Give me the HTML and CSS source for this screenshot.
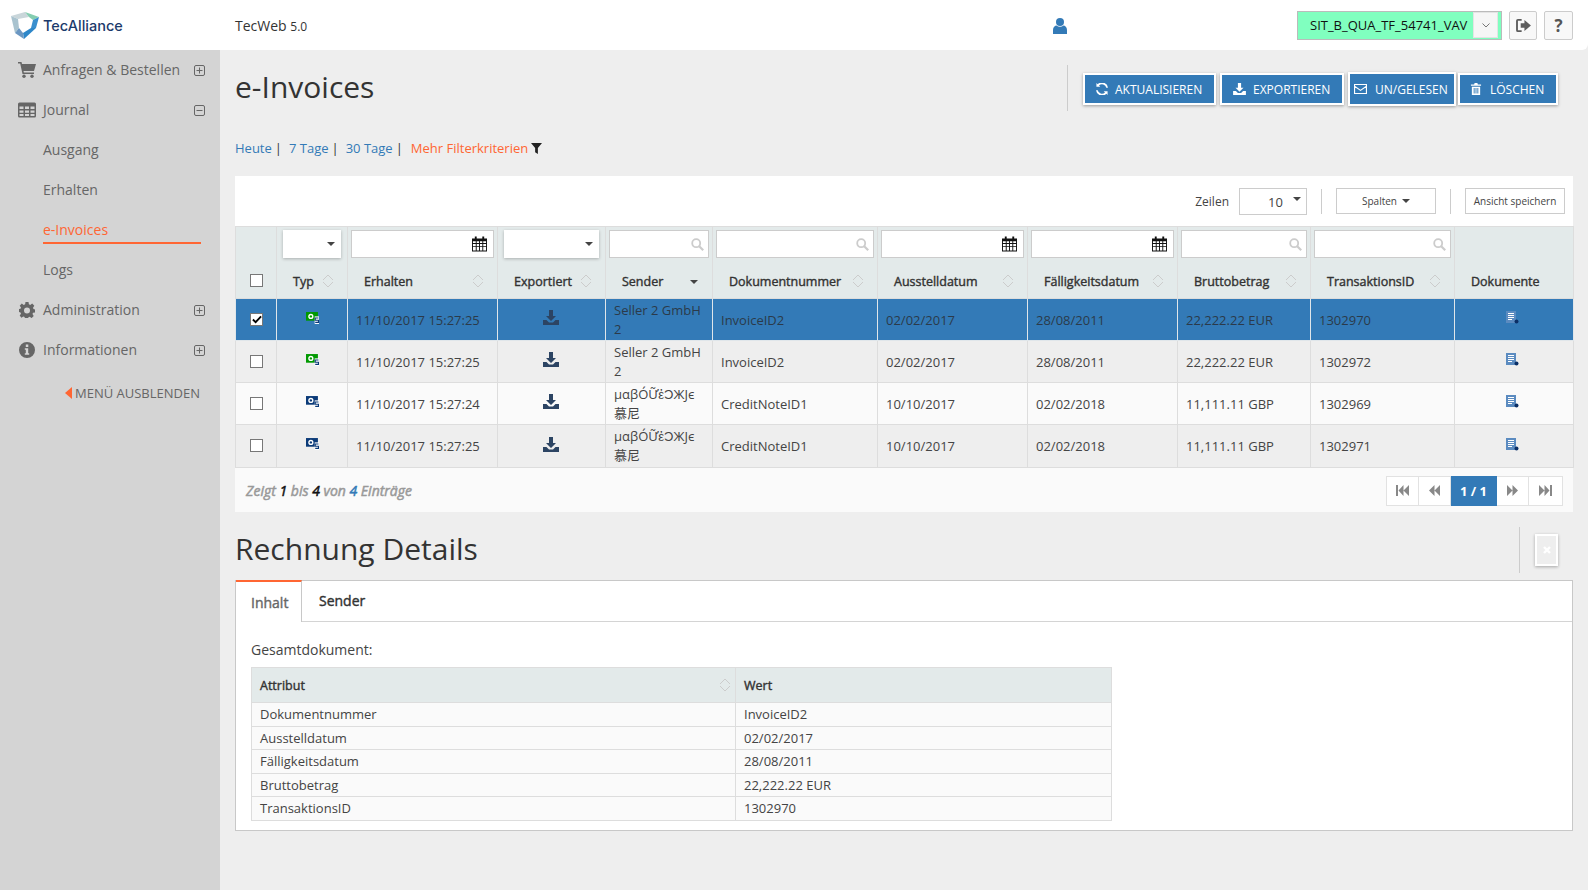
FILE: index.html
```html
<!DOCTYPE html>
<html lang="de">
<head>
    <meta charset="UTF-8">
    <title>e-Invoices - TecWeb</title>
    <link rel="stylesheet" href="styles.css">
</head>
<body>
    <svg class="icon-defs">
        <symbol id="i-download" viewBox="0 0 16 15"><path d="M6 0h4v6h3l-5 5-5-5h3z"/><path d="M0 10h3.500l2.500 2.500h4L12.500 10H16v5H0z"/></symbol>
        <symbol id="i-note-green" viewBox="0 0 12 11"><path fill="#090" d="M0 0h11v8H0z"/><circle cx="4.500" cy="4" r="2.400" fill="#fff"/><circle cx="4.500" cy="4" r="1.100" fill="#090"/><path fill="#fff" d="M8 4h4v7H8z"/><path fill="none" stroke="#0b3a78" d="M11.500 5.500h-3v2h3v2h-3"/></symbol>
        <symbol id="i-note-blue" viewBox="0 0 12 11"><path fill="#0b3a78" d="M0 0h11v8H0z"/><circle cx="4.500" cy="4" r="2.400" fill="#fff"/><circle cx="4.500" cy="4" r="1.100" fill="#0b3a78"/><path fill="#fff" d="M8 4h4v7H8z"/><path fill="none" stroke="#0b3a78" d="M11.500 5.500h-3v2h3v2h-3"/></symbol>
        <symbol id="i-doc" viewBox="0 0 13 13"><path fill="#5b8bc0" d="M0 0h10v12H0z"/><path stroke="#fff" d="M2 2.500h6M2 4.500h6M2 6.500h6M2 8.500h4"/><circle cx="10.500" cy="10.500" r="2" fill="#0b2f66"/></symbol>
        <symbol id="i-calendar" viewBox="0 0 16 16"><path d="M0 2h3V0h2v2h6V0h2v2h3v14H0z"/><path fill="#fff" d="M1 5h3v2H1zM5 5h2.500v2H5zM8.500 5H11v2H8.500zM12 5h3v2h-3zM1 8h3v2H1zM5 8h2.500v2H5zM8.500 8H11v2H8.500zM12 8h3v2h-3zM1 11h3v4H1zM5 11h2.500v4H5zM8.500 11H11v4H8.500zM12 11h3v4h-3z"/></symbol>
        <symbol id="i-search" viewBox="0 0 13 13"><circle cx="5.200" cy="5.200" r="4" fill="none" stroke="currentColor" stroke-width="1.800"/><path stroke="currentColor" stroke-width="2.200" d="M8.200 8.200l4 4"/></symbol>
        <symbol id="i-sort" viewBox="0 0 12 14"><path fill="none" stroke="currentColor" d="M1 6l5-5 5 5M1 8l5 5 5-5"/></symbol>
        <symbol id="i-plus" viewBox="0 0 11 11"><rect x=".5" y=".5" width="10" height="10" rx="1.500" fill="none" stroke="currentColor"/><path stroke="currentColor" d="M2.500 5.500h6M5.500 2.500v6"/></symbol>
        <symbol id="i-minus" viewBox="0 0 11 11"><rect x=".5" y=".5" width="10" height="10" rx="1.500" fill="none" stroke="currentColor"/><path stroke="currentColor" d="M2.500 5.500h6"/></symbol>
        <symbol id="i-nav-first" viewBox="0 0 13 11"><path d="M0 0h2v11H0zM2.500 5.500L7.500 0v11zM7.500 5.500L13 0v11z"/></symbol>
        <symbol id="i-nav-prev" viewBox="0 0 11 11"><path d="M0 5.500L5.500 0v11zM5.500 5.500L11 0v11z"/></symbol>
        <symbol id="i-nav-next" viewBox="0 0 11 11"><path d="M0 0l5.500 5.500L0 11zM5.500 0L11 5.500 5.500 11z"/></symbol>
        <symbol id="i-nav-last" viewBox="0 0 13 11"><path d="M0 0l5.500 5.500L0 11zM5.500 0l5 5.500-5 5.500zM11 0h2v11h-2z"/></symbol>
    </svg>

    <header class="topbar">
        <div class="brand">
            <svg class="brand-mark" viewBox="11 11 28 27">
                <path fill="#c9d6da" d="M11 15l14-4 4 5-11 2z"/>
                <path fill="#a9c3cf" d="M11 15l7 3 1 9-4 5z"/>
                <path fill="#84cdb0" d="M25 11l14 5-6 3-4-3z"/>
                <path fill="#3a8fce" d="M39 16l-3 11-5 0 2-8z"/>
                <path fill="#2e87c9" d="M36 27L24 38l-1-6 8-5z"/>
                <path fill="#6b97c2" d="M15 32l4-5 4 5 1 6z"/>
            </svg>
            <span class="brand-name">TecAlliance</span>
        </div>
        <span class="app-name">TecWeb <small>5.0</small></span>
        <svg class="user-icon" viewBox="0 0 14 16"><circle cx="7" cy="4" r="4"/><path d="M0 16v-4c0-3 2-4.500 3.500-4.500 1 .8 2.200 1.200 3.500 1.200s2.500-.4 3.500-1.200C12 7.500 14 9 14 12v4z"/></svg>
        <div class="topbar-right">
            <div class="env-select">
                <span class="env-name">SIT_B_QUA_TF_54741_VAV</span>
                <span class="env-caret"><svg viewBox="0 0 8 5"><path fill="none" stroke="currentColor" d="M.5.5L4 4 7.500.5"/></svg></span>
            </div>
            <a class="icon-btn logout-btn"><svg viewBox="0 0 16 14"><path d="M0 2a2 2 0 012-2h4v2H2v10h4v2H2a2 2 0 01-2-2z"/><path d="M5 4.500h4V1l7 6-7 6V9.500H5z"/></svg></a>
            <a class="icon-btn help-btn">?</a>
        </div>
    </header>

    <div class="layout">
        <nav class="sidebar">
            <a class="nav-item">
                <svg class="nav-icon" viewBox="0 0 18 16"><path d="M0 0h3.500l.5 2h14l-2 7H5.500l.4 1.500H16V12H4.500L2.200 1.500H0z"/><circle cx="6" cy="14.300" r="1.700"/><circle cx="14" cy="14.300" r="1.700"/></svg>
                <span class="nav-label">Anfragen &amp; Bestellen</span>
                <svg class="nav-toggle"><use href="#i-plus"/></svg>
            </a>
            <a class="nav-item">
                <svg class="nav-icon" viewBox="0 0 18 15"><path fill-rule="evenodd" d="M1.500 0h15A1.500 1.500 0 0118 1.500v12a1.500 1.500 0 01-1.500 1.500h-15A1.500 1.500 0 010 13.500v-12A1.500 1.500 0 011.500 0zM1.500 4v2.500h4V4zM7 4v2.500h4V4zM12.500 4v2.500h4V4zM1.500 8v2.200h4V8zM7 8v2.200h4V8zM12.500 8v2.200h4V8zM1.500 11.500v2h4v-2zM7 11.500v2h4v-2zM12.500 11.500v2h4v-2z"/></svg>
                <span class="nav-label">Journal</span>
                <svg class="nav-toggle"><use href="#i-minus"/></svg>
            </a>
            <a class="nav-sub"><span>Ausgang</span></a>
            <a class="nav-sub"><span>Erhalten</span></a>
            <a class="nav-sub active"><span>e-Invoices</span></a>
            <a class="nav-sub"><span>Logs</span></a>
            <a class="nav-item">
                <svg class="nav-icon" viewBox="0 0 16 16"><path fill-rule="evenodd" d="M6.500 0h3l.4 2.300 1.300.6L13.200 1.600l2.100 2.100L14 5.700l.5 1.300 1.500.4v3l-2 .4-.5 1.300 1.200 1.900-2.100 2.100-1.900-1.300-1.300.5-.4 1.600h-3l-.4-2-1.300-.5-1.900 1.300L.7 13.600l1.300-1.900-.5-1.300L0 10V7l1.500-.3.500-1.300L.7 3.700l2.100-2.100 1.900 1.300 1.400-.6zM8 5.500a3 3 0 100 6 3 3 0 000-6z"/></svg>
                <span class="nav-label">Administration</span>
                <svg class="nav-toggle"><use href="#i-plus"/></svg>
            </a>
            <a class="nav-item">
                <svg class="nav-icon" viewBox="0 0 16 16"><path fill-rule="evenodd" d="M8 0a8 8 0 110 16A8 8 0 018 0zM6.800 2.500v2.400h2.500V2.500zM5.800 6.300v1.500h1v3.500h-1v1.500h4.400v-1.500h-1V6.300z"/></svg>
                <span class="nav-label">Informationen</span>
                <svg class="nav-toggle"><use href="#i-plus"/></svg>
            </a>
            <a class="nav-hide"><span class="hide-arrow"></span>MENÜ AUSBLENDEN</a>
        </nav>

        <main class="content">
            <div class="page-head">
                <h1 class="page-title">e-Invoices</h1>
                <div class="action-bar">
                    <a class="action-btn btn-refresh">
                        <svg viewBox="0 0 14 14"><path d="M12 5.500A5 5 0 003.500 3L5 4.500H.5V0L2 1.500A7 7 0 0114 5.500zM2 8.500A5 5 0 0010.500 11L9 9.500h4.500V14L12 12.500A7 7 0 010 8.500z"/></svg>
                        AKTUALISIEREN
                    </a>
                    <a class="action-btn btn-export">
                        <svg viewBox="0 0 16 15"><use href="#i-download"/></svg>
                        EXPORTIEREN
                    </a>
                    <a class="action-btn btn-read">
                        <svg viewBox="0 0 14 11"><path fill="none" stroke="currentColor" stroke-width="1.200" d="M.6.6h12.800v9.800H.6zM.6 2.500L7 7l6.400-4.500"/></svg>
                        UN/GELESEN
                    </a>
                    <a class="action-btn btn-delete">
                        <svg viewBox="0 0 11 13"><path fill-rule="evenodd" d="M4 0h3l.5 1.500H11V3H0V1.500h3.500zM1 4h9v9H1zM3 5.500v6h1v-6zM5 5.500v6h1v-6zM7 5.500v6h1v-6z"/></svg>
                        LÖSCHEN
                    </a>
                </div>
            </div>

            <div class="quick-filter">
                <a>Heute</a><span class="sep">|</span>
                <a>7 Tage</a><span class="sep">|</span>
                <a>30 Tage</a><span class="sep">|</span>
                <a class="more-filter">Mehr Filterkriterien</a>
                <svg class="funnel" viewBox="0 0 12 12"><path d="M0 0h12L7.500 5.500V12l-3-2V5.500z"/></svg>
            </div>

            <section class="grid-panel">
                <div class="grid-toolbar">
                    <span class="rows-label">Zeilen</span>
                    <div class="rows-select"><span>10</span><i class="caret"></i></div>
                    <span class="tool-sep"></span>
                    <a class="tool-btn btn-columns">Spalten <i class="caret"></i></a>
                    <span class="tool-sep"></span>
                    <a class="tool-btn btn-save">Ansicht speichern</a>
                </div>

                <table class="grid">
                    <colgroup>
                        <col class="c-check"><col class="c-type"><col class="c-received"><col class="c-exported">
                        <col class="c-sender"><col class="c-number"><col class="c-date"><col class="c-date">
                        <col class="c-amount"><col class="c-trans"><col class="c-docs">
                    </colgroup>
                    <thead>
                        <tr class="filter-row">
                            <th></th>
                            <th class="pick-cell"><div class="pick"><i class="caret"></i></div></th>
                            <th><div class="field"><svg class="cal"><use href="#i-calendar"/></svg></div></th>
                            <th class="pick-cell"><div class="pick"><i class="caret"></i></div></th>
                            <th><div class="field"><svg class="lens"><use href="#i-search"/></svg></div></th>
                            <th><div class="field"><svg class="lens"><use href="#i-search"/></svg></div></th>
                            <th><div class="field"><svg class="cal"><use href="#i-calendar"/></svg></div></th>
                            <th><div class="field"><svg class="cal"><use href="#i-calendar"/></svg></div></th>
                            <th><div class="field"><svg class="lens"><use href="#i-search"/></svg></div></th>
                            <th><div class="field"><svg class="lens"><use href="#i-search"/></svg></div></th>
                            <th></th>
                        </tr>
                        <tr class="label-row">
                            <th class="check-cell"><span class="check"></span></th>
                            <th>Typ<svg class="sort"><use href="#i-sort"/></svg></th>
                            <th>Erhalten<svg class="sort"><use href="#i-sort"/></svg></th>
                            <th>Exportiert<svg class="sort"><use href="#i-sort"/></svg></th>
                            <th>Sender<i class="caret sort-active"></i></th>
                            <th>Dokumentnummer<svg class="sort"><use href="#i-sort"/></svg></th>
                            <th>Ausstelldatum<svg class="sort"><use href="#i-sort"/></svg></th>
                            <th>Fälligkeitsdatum<svg class="sort"><use href="#i-sort"/></svg></th>
                            <th>Bruttobetrag<svg class="sort"><use href="#i-sort"/></svg></th>
                            <th>TransaktionsID<svg class="sort"><use href="#i-sort"/></svg></th>
                            <th>Dokumente</th>
                        </tr>
                    </thead>
                    <tbody>
                        <tr class="selected">
                            <td class="check-cell"><span class="check checked"><svg viewBox="0 0 11 9"><path fill="none" stroke="#000" stroke-width="2" d="M1 4.500L4 7.500 10 1"/></svg></span></td>
                            <td class="icon-cell"><svg class="type-icon"><use href="#i-note-green"/></svg></td>
                            <td>11/10/2017 15:27:25</td>
                            <td class="icon-cell"><svg class="dl-icon"><use href="#i-download"/></svg></td>
                            <td class="sender">Seller 2 GmbH 2</td>
                            <td>InvoiceID2</td>
                            <td>02/02/2017</td>
                            <td>28/08/2011</td>
                            <td>22,222.22 EUR</td>
                            <td>1302970</td>
                            <td class="icon-cell"><svg class="doc-icon"><use href="#i-doc"/></svg></td>
                        </tr>
                        <tr class="even">
                            <td class="check-cell"><span class="check"></span></td>
                            <td class="icon-cell"><svg class="type-icon"><use href="#i-note-green"/></svg></td>
                            <td>11/10/2017 15:27:25</td>
                            <td class="icon-cell"><svg class="dl-icon"><use href="#i-download"/></svg></td>
                            <td class="sender">Seller 2 GmbH 2</td>
                            <td>InvoiceID2</td>
                            <td>02/02/2017</td>
                            <td>28/08/2011</td>
                            <td>22,222.22 EUR</td>
                            <td>1302972</td>
                            <td class="icon-cell"><svg class="doc-icon"><use href="#i-doc"/></svg></td>
                        </tr>
                        <tr>
                            <td class="check-cell"><span class="check"></span></td>
                            <td class="icon-cell"><svg class="type-icon"><use href="#i-note-blue"/></svg></td>
                            <td>11/10/2017 15:27:24</td>
                            <td class="icon-cell"><svg class="dl-icon"><use href="#i-download"/></svg></td>
                            <td class="sender">μαβÓỮἐϽЖJє 慕尼</td>
                            <td>CreditNoteID1</td>
                            <td>10/10/2017</td>
                            <td>02/02/2018</td>
                            <td>11,111.11 GBP</td>
                            <td>1302969</td>
                            <td class="icon-cell"><svg class="doc-icon"><use href="#i-doc"/></svg></td>
                        </tr>
                        <tr class="even last">
                            <td class="check-cell"><span class="check"></span></td>
                            <td class="icon-cell"><svg class="type-icon"><use href="#i-note-blue"/></svg></td>
                            <td>11/10/2017 15:27:25</td>
                            <td class="icon-cell"><svg class="dl-icon"><use href="#i-download"/></svg></td>
                            <td class="sender">μαβÓỮἐϽЖJє 慕尼</td>
                            <td>CreditNoteID1</td>
                            <td>10/10/2017</td>
                            <td>02/02/2018</td>
                            <td>11,111.11 GBP</td>
                            <td>1302971</td>
                            <td class="icon-cell"><svg class="doc-icon"><use href="#i-doc"/></svg></td>
                        </tr>
                    </tbody>
                </table>

                <div class="grid-footer">
                    <span class="entries">Zeigt <b>1</b> bis <b>4</b> von <b class="total">4</b> Einträge</span>
                    <div class="pager">
                        <a class="page-btn first"><svg><use href="#i-nav-first"/></svg></a>
                        <a class="page-btn"><svg><use href="#i-nav-prev"/></svg></a>
                        <a class="page-btn current">1 / 1</a>
                        <a class="page-btn"><svg><use href="#i-nav-next"/></svg></a>
                        <a class="page-btn last"><svg><use href="#i-nav-last"/></svg></a>
                    </div>
                </div>
            </section>

            <div class="details-head">
                <h2 class="details-title">Rechnung Details</h2>
                <div class="details-close">
                    <a class="close-btn"><svg viewBox="0 0 8 8"><path stroke="#fff" stroke-width="2.400" d="M1 1l6 6M7 1L1 7"/></svg></a>
                </div>
            </div>

            <section class="tab-panel">
                <div class="tabs">
                    <a class="tab active">Inhalt</a>
                    <a class="tab">Sender</a>
                </div>
                <div class="tab-body">
                    <p class="doc-label">Gesamtdokument:</p>
                    <table class="attr-table">
                        <thead>
                            <tr><th class="attr-name">Attribut<svg class="sort"><use href="#i-sort"/></svg></th><th>Wert</th></tr>
                        </thead>
                        <tbody>
                            <tr><td>Dokumentnummer</td><td>InvoiceID2</td></tr>
                            <tr><td>Ausstelldatum</td><td>02/02/2017</td></tr>
                            <tr><td>Fälligkeitsdatum</td><td>28/08/2011</td></tr>
                            <tr><td>Bruttobetrag</td><td>22,222.22 EUR</td></tr>
                            <tr><td>TransaktionsID</td><td>1302970</td></tr>
                        </tbody>
                    </table>
                </div>
            </section>
        </main>
    </div>
</body>
</html>
```
FILE: styles.css
```css
* {
    box-sizing: border-box;
}
body {
    margin: 0;
    height: 100vh;
    overflow: hidden;
    background-color: #eeeeee;
    color: #444;
    font-family: "Open Sans", "Noto Sans CJK SC", sans-serif;
    font-size: 13px;
}
.icon-defs {
    display: block;
    width: 0;
    height: 0;
}
h1, h2, p {
    margin: 0;
    font-weight: 400;
}

/* top bar */
.topbar {
    height: 50px;
    display: flex;
    align-items: center;
    background-color: white;
    border-bottom-right-radius: 6px;
}
.brand {
    width: 235px;
    padding-left: 11px;
    display: flex;
    align-items: center;
    gap: 4px;
}
.brand-mark {
    width: 28px;
    height: 27px;
}
.brand-name {
    font-family: Inter, sans-serif;
    font-size: 14.500px;
    font-weight: 500;
    color: #1b3a6b;
}
.app-name {
    width: 818px;
    font-size: 14px;
    color: #333;
}
.app-name small {
    font-size: 12px;
}
.user-icon {
    width: 14px;
    height: 16px;
    margin-top: 1px;
    fill: #337ab7;
}
.topbar-right {
    margin-left: auto;
    padding-right: 15px;
    display: flex;
    align-items: center;
}
.env-select {
    width: 205px;
    height: 29px;
    display: flex;
    align-items: center;
    background-color: #80ffbf;
    border: 1px solid #bbb;
    padding-left: 12px;
    color: #111;
    font-size: 13px;
}
.env-name {
    flex: 1;
    white-space: nowrap;
}
.env-caret {
    width: 25px;
    height: 26px;
    flex-shrink: 0;
    margin-right: 3px;
    display: flex;
    align-items: center;
    justify-content: center;
    background-color: #f6f6f6;
    border: 1px solid #e4e4e4;
    color: #777;
}
.env-caret svg {
    width: 8px;
    height: 5px;
}
.icon-btn {
    width: 29px;
    height: 29px;
    margin-left: 7px;
    display: flex;
    align-items: center;
    justify-content: center;
    background-color: #f8f8f8;
    border: 1px solid #ccc;
    border-radius: 2px;
    color: #555;
}
.icon-btn svg {
    width: 15px;
    height: 13px;
    fill: #5c5c5c;
}
.logout-btn {
    width: 28px;
}
.help-btn {
    font-size: 17px;
    font-weight: 700;
}

/* sidebar */
.layout {
    display: flex;
    height: 840px;
}
.sidebar {
    width: 220px;
    flex-shrink: 0;
    background-color: #d4d4d4;
    color: #666;
    font-size: 14px;
}
.nav-item {
    height: 40px;
    padding: 0 15px 0 18px;
    display: flex;
    align-items: center;
}
.nav-icon {
    width: 18px;
    height: 16px;
    fill: #666;
}
.nav-label {
    margin-left: 7px;
    margin-bottom: 2px;
    flex: 1;
}
.nav-toggle {
    width: 11px;
    height: 11px;
    color: #666;
}
.nav-sub {
    display: block;
    height: 40px;
    margin: 0 19px 0 43px;
    line-height: 40px;
}
.nav-sub span {
    display: block;
    height: 34px;
}
.nav-sub.active {
    color: #ff6633;
}
.nav-sub.active span {
    border-bottom: 2px solid #ff6633;
}
.nav-hide {
    height: 46px;
    padding-right: 20px;
    display: flex;
    align-items: center;
    justify-content: flex-end;
    font-size: 13px;
}
.hide-arrow {
    margin-right: 3px;
    border-top: 6px solid transparent;
    border-bottom: 6px solid transparent;
    border-right: 7px solid #ff6633;
}

/* content */
.content {
    flex: 1;
    min-width: 0;
    padding: 0 15px;
}
.page-head {
    margin-top: 15px;
    height: 46px;
    display: flex;
    justify-content: space-between;
    align-items: center;
}
.page-title, .details-title {
    font-size: 30px;
    color: #333;
}
.page-title {
    padding-bottom: 4px;
}
.action-bar {
    height: 46px;
    padding: 2px 15px 0;
    display: flex;
    align-items: center;
    gap: 4px;
    border-left: 1px solid #ccc;
}
.action-btn {
    height: 32px;
    display: flex;
    align-items: center;
    padding: 0;
    background-color: #337ab7;
    border: 2px solid white;
    box-shadow: 0 1px 3px rgba(0,0,0,0.35);
    color: white;
    font-size: 12px;
    white-space: nowrap;
}
.action-btn svg {
    width: 12px;
    height: 12px;
    flex-shrink: 0;
    fill: white;
    color: white;
}
.btn-refresh {
    width: 133px;
    padding-left: 11px;
    gap: 7px;
}
.btn-export {
    width: 124px;
    padding-left: 11px;
    gap: 7px;
}
.btn-export svg {
    width: 13px;
}
.btn-read {
    width: 108px;
    height: 34px;
    padding-left: 4px;
    gap: 8px;
}
.btn-read svg {
    width: 13px;
}
.btn-delete {
    width: 100px;
    margin-left: -2px;
    padding-left: 10px;
    gap: 8px;
}
.quick-filter {
    margin-top: 27px;
    height: 20px;
    display: flex;
    align-items: center;
    color: #333;
}
.quick-filter a {
    color: #337ab7;
}
.quick-filter .sep {
    margin: 0 7px 0 3px;
}
.quick-filter a.more-filter {
    margin-left: 1px;
    color: #ff6633;
}
.funnel {
    width: 11px;
    height: 11px;
    margin-left: 3px;
    fill: #222;
}

/* grid */
.grid-panel {
    margin-top: 18px;
    background-color: #fafafa;
}
.grid-toolbar {
    height: 50px;
    padding-right: 8px;
    display: flex;
    align-items: center;
    justify-content: flex-end;
    background-color: white;
}
.rows-label {
    margin-right: 10px;
    color: #444;
    font-size: 12px;
}
.rows-select {
    width: 68px;
    height: 27px;
    padding: 2px 5px 0 28px;
    display: flex;
    justify-content: space-between;
    align-items: center;
    border: 1px solid #ccc;
    font-size: 13px;
}
.rows-select .caret {
    margin-top: -6px;
}
.tool-sep {
    width: 1px;
    height: 25px;
    margin: 0 14px;
    background-color: #ccc;
}
.tool-btn {
    height: 26px;
    width: 100px;
    display: flex;
    align-items: center;
    justify-content: center;
    gap: 5px;
    background-color: white;
    border: 1px solid #ccc;
    color: #444;
    font-size: 10px;
}
.caret {
    display: inline-block;
    width: 0;
    height: 0;
    border-top: 4px solid #444;
    border-left: 4px solid transparent;
    border-right: 4px solid transparent;
}
.grid {
    width: 100%;
    table-layout: fixed;
    border-collapse: collapse;
}
.c-check { width: 41px; }
.c-type { width: 71px; }
.c-received { width: 150px; }
.c-exported { width: 108px; }
.c-sender { width: 107px; }
.c-number { width: 165px; }
.c-date { width: 150px; }
.c-amount { width: 133px; }
.c-trans { width: 144px; }
.c-docs { width: 119px; }
.grid th, .grid td {
    border: 1px solid #dddddd;
}
.grid thead th {
    background-color: #e3eaea;
    color: #333;
    text-align: left;
}
.filter-row th {
    height: 38px;
    padding: 3px 3px 4px 3px;
    border-bottom: none;
    vertical-align: top;
}
.filter-row th.pick-cell {
    padding: 3px 6px 4px 6px;
}
.label-row th {
    position: relative;
    height: 34px;
    padding: 0 0 0 16px;
    border-top: none;
    font-size: 12.500px;
    font-weight: 400;
    -webkit-text-stroke: 0.4px currentColor;
}
.field, .pick {
    height: 28px;
    display: flex;
    align-items: center;
    justify-content: flex-end;
    background-color: white;
}
.field {
    border: 1px solid #ccc;
}
.pick {
    padding-right: 6px;
    box-shadow: 0 1px 3px rgba(0,0,0,0.25);
}
.cal {
    width: 15px;
    height: 16px;
    margin-right: 6px;
    fill: #111;
}
.lens {
    width: 13px;
    height: 13px;
    margin-right: 4px;
    color: #ccc;
}
.sort {
    position: absolute;
    right: 13px;
    top: 9px;
    width: 12px;
    height: 14px;
    color: #ccc;
}
.caret.sort-active {
    position: absolute;
    right: 14px;
    top: 15px;
}
.grid thead th.check-cell, .check-cell {
    text-align: center;
}
.label-row th.check-cell {
    padding: 0;
}
.check {
    display: inline-flex;
    align-items: center;
    justify-content: center;
    width: 13px;
    height: 13px;
    margin: 0 0 3px 1px;
    vertical-align: middle;
    background-color: white;
    border: 1px solid #777;
}
.check svg {
    width: 10px;
    height: 9px;
}
.grid tbody tr {
    height: 42px;
    background-color: #fafafa;
}
.grid tbody tr.even {
    background-color: #eeeeee;
}
.grid tbody tr.last {
    height: 43px;
}
.grid tbody tr.selected {
    height: 42px;
    background-color: #337ab7;
}
.grid tbody tr.selected td {
    border-color: #e0e6ea;
    color: #2b3a4a;
}
.grid td {
    padding: 0 8px;
    color: #444;
}
.grid td.sender {
    line-height: 19px;
}
.icon-cell {
    text-align: center;
    line-height: 0;
}
.grid td.icon-cell {
    padding: 0 9px 4px 8px;
}
.type-icon {
    width: 13px;
    height: 12px;
    margin-left: 1px;
}
.dl-icon {
    width: 16px;
    height: 15px;
    fill: #2c4463;
}
.doc-icon {
    width: 13px;
    height: 13px;
    margin-right: 2px;
}
.grid-footer {
    height: 44px;
    padding: 0 10px 0 11px;
    display: flex;
    align-items: center;
    justify-content: space-between;
}
.entries {
    color: #999;
    font-style: italic;
    font-size: 14px;
    -webkit-text-stroke: 0.5px currentColor;
}
.entries b {
    font-weight: 400;
    color: #111;
}
.entries b.total {
    color: #337ab7;
}
.pager {
    display: flex;
    height: 30px;
    margin-top: 1px;
}
.page-btn {
    width: 32px;
    display: flex;
    align-items: center;
    justify-content: center;
    background-color: white;
    border: 1px solid #e2e2e2;
    border-left: none;
    color: #888;
}
.page-btn svg {
    width: 13px;
    height: 11px;
    fill: #888;
}
.page-btn.first {
    width: 33px;
    border-left: 1px solid #e2e2e2;
}
.page-btn.last {
    width: 34px;
}
.page-btn.current {
    width: 46px;
    background-color: #337ab7;
    border-color: #337ab7;
    color: white;
    font-weight: 700;
}

/* details */
.details-head {
    height: 68px;
    display: flex;
    justify-content: space-between;
    align-items: center;
}
.details-title {
    padding-top: 4px;
}
.details-close {
    height: 46px;
    margin-top: 8px;
    padding: 0 15px 0 15px;
    display: flex;
    align-items: center;
    border-left: 1px solid #ccc;
}
.close-btn {
    width: 23px;
    height: 32px;
    display: flex;
    align-items: center;
    justify-content: center;
    background-color: #eeeeee;
    border: 2px solid white;
    box-shadow: 0 1px 3px rgba(0,0,0,0.3);
}
.close-btn svg {
    width: 8px;
    height: 8px;
}
.tab-panel {
    height: 251px;
    background-color: white;
    border: 1px solid #c8c8c8;
}
.tabs {
    height: 41px;
    display: flex;
    border-bottom: 1px solid #d4d4d4;
}
.tab {
    height: 38px;
    padding: 0 16px 0 17px;
    display: flex;
    align-items: center;
    color: #333;
    font-size: 14px;
    -webkit-text-stroke: 0.4px currentColor;
}
.tab.active {
    width: 66px;
    padding: 0 0 0 15px;
    margin-top: -1px;
    height: 42px;
    background-color: white;
    border-top: 2px solid #ff6633;
    border-right: 1px solid #c8c8c8;
    color: #666;
}
.tab-body {
    padding: 18px 15px 0;
}
.doc-label {
    height: 20px;
    font-size: 14px;
    color: #444;
}
.attr-table {
    width: 861px;
    margin-top: 7px;
    table-layout: fixed;
    border-collapse: collapse;
}
.attr-table th, .attr-table td {
    padding: 0 8px;
    border: 1px solid #dddddd;
    text-align: left;
}
.attr-table th {
    height: 35px;
    background-color: #e3eaea;
    color: #333;
    font-weight: 400;
    font-size: 12.500px;
    -webkit-text-stroke: 0.4px currentColor;
}
.attr-table td {
    height: 23.500px;
    background-color: #fafafa;
    color: #444;
}
.attr-name {
    position: relative;
    width: 484px;
}
.attr-name .sort {
    right: 4px;
    top: 10px;
}
```
